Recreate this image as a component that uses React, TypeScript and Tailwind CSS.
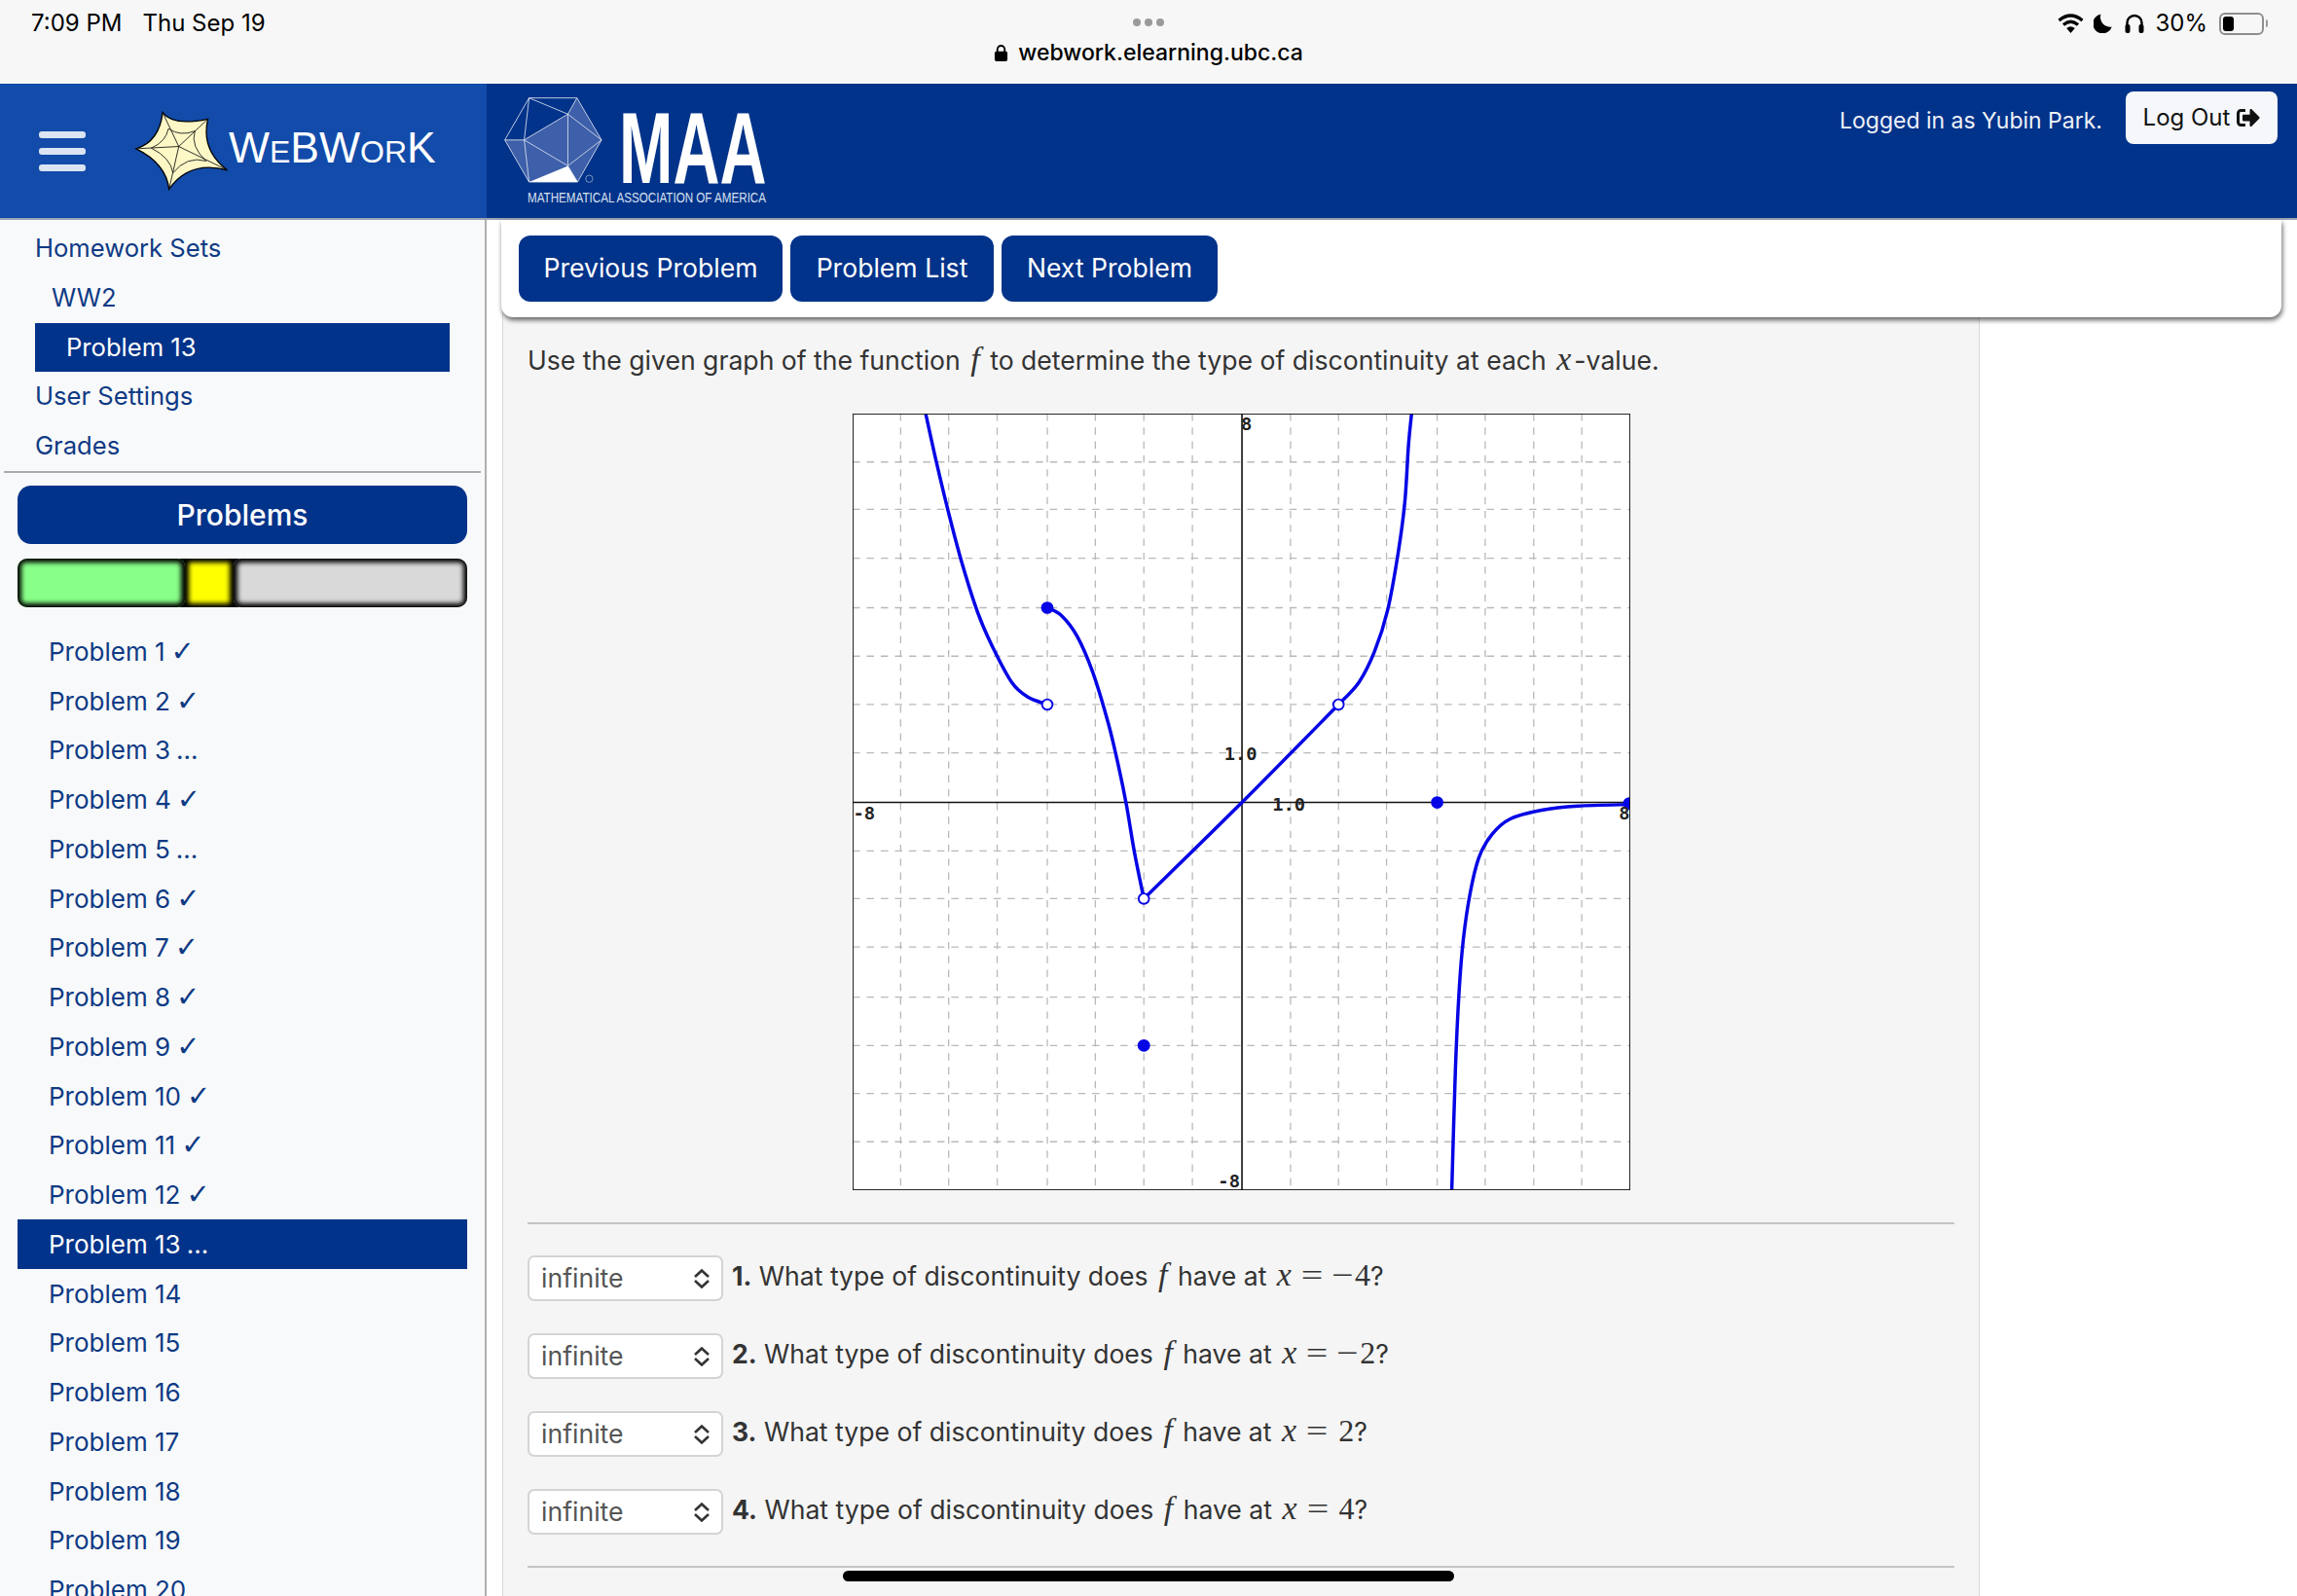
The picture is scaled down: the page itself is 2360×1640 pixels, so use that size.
import React from "react";
import { FaSignOutAlt } from "react-icons/fa";

type P = [number, number];
function smooth(pts: P[]): string {
  let d = `M${pts[0][0]} ${pts[0][1]}`;
  for (let i = 0; i < pts.length - 1; i++) {
    const p0 = pts[Math.max(i - 1, 0)];
    const p1 = pts[i];
    const p2 = pts[i + 1];
    const p3 = pts[Math.min(i + 2, pts.length - 1)];
    d += ` C${p1[0] + (p2[0] - p0[0]) / 6} ${p1[1] + (p2[1] - p0[1]) / 6} ${p2[0] - (p3[0] - p1[0]) / 6} ${p2[1] - (p3[1] - p1[1]) / 6} ${p2[0]} ${p2[1]}`;
  }
  return d;
}

const gridX = [122, 214, 307, 403, 495, 588, 681, 869, 961, 1053, 1150, 1242, 1335, 1427];
const gridY = [122, 214, 309, 405, 499, 593, 687, 877, 970, 1064, 1161, 1255, 1348, 1442];

const curves: P[][] = [
  [[170, 28], [190, 120], [215, 225], [240, 320], [270, 415], [300, 485], [335, 550], [365, 578], [403, 593]],
  [[403, 405], [430, 420], [460, 460], [490, 530], [520, 630], [540, 715], [555, 790], [570, 880], [588, 970]],
  [[588, 970], [776, 783], [961, 593]],
  [[961, 593], [1000, 550], [1030, 490], [1055, 410], [1075, 300], [1088, 200], [1095, 90], [1101, 28]],
  [[1178, 1536], [1185, 1300], [1192, 1150], [1200, 1050], [1213, 960], [1230, 890], [1255, 845], [1290, 815], [1350, 798], [1420, 790], [1520, 787]],
];

function Graph() {
  return (
    <svg viewBox="30 28 1490 1508" preserveAspectRatio="none" className="block w-[799px] h-[798px] mx-auto bg-white">
      {gridX.map((x) => (
        <line key={x} x1={x} x2={x} y1={28} y2={1536} stroke="#b9b9b9" strokeWidth={2.4} strokeDasharray="14 13" />
      ))}
      {gridY.map((y) => (
        <line key={y} y1={y} y2={y} x1={30} x2={1520} stroke="#b9b9b9" strokeWidth={2.4} strokeDasharray="14 13" />
      ))}
      <line x1={776} x2={776} y1={28} y2={1536} stroke="#111" strokeWidth={3} />
      <line x1={30} x2={1520} y1={783} y2={783} stroke="#111" strokeWidth={3} />
      {curves.map((c, i) => (
        <path key={i} d={smooth(c)} fill="none" stroke="#0505e6" strokeWidth={6.5} />
      ))}
      {[[403, 405], [588, 1255], [1150, 783], [1518, 785]].map(([x, y]) => (
        <ellipse key={x} cx={x} cy={y} rx={12} ry={12} fill="#0505e6" />
      ))}
      {[[403, 593], [588, 970], [961, 593]].map(([x, y]) => (
        <ellipse key={x} cx={x} cy={y} rx={10} ry={10} fill="#fff" stroke="#0505e6" strokeWidth={3.5} />
      ))}
      <g className="font-['DejaVu_Sans_Mono',monospace] font-bold" fontSize={35} fill="#222">
        <text x={774} y={60}>8</text>
        <text x={31} y={816}>-8</text>
        <text x={742} y={701}>1.0</text>
        <text x={834} y={799}>1.0</text>
        <text x={1498} y={816}>8</text>
        <text x={730} y={1530}>-8</text>
      </g>
      <rect x={30} y={28} width={1490} height={1508} fill="none" stroke="#111" strokeWidth={3.4} />
    </svg>
  );
}

function Star() {
  return (
    <svg viewBox="50 70 300 250" className="w-[100px] h-[83px] shrink-0">
      <path d="M140 75 Q172 118 280 95 Q258 190 340 253 Q222 222 160 312 Q150 232 58 187 Q130 165 140 75 Z" fill="#fdf8c6" stroke="#000" strokeWidth={4} strokeLinejoin="miter" />
      <g fill="none" stroke="#111" strokeWidth={2.6}>
        <path d="M140 75 L190 180 M280 95 L190 180 M340 253 L190 180 M160 312 L190 180 M58 187 L190 180" />
        <path d="M158 125 Q195 150 240 132 Q225 180 275 225 Q215 208 172 262 Q165 215 105 185 Q150 165 158 125 Z" />
      </g>
    </svg>
  );
}

function MaaMark() {
  const shade = "#3e5fa9";
  return (
    <svg viewBox="50 55 310 275" className="w-[103px] h-[92px] shrink-0">
      <g fill={shade}>
        <path d="M115 192 L250 112 L250 272 Z" />
        <path d="M250 112 L354 192 L250 272 Z" />
        <path d="M278 62 L354 192 L250 112 Z" />
        <path d="M55 192 L115 192 L130 322 Z" />
        <path d="M115 192 L250 272 L130 322 Z" />
        <path d="M250 272 L354 192 L280 322 Z" />
      </g>
      <path d="M130 322 L250 272 L280 322 Z" fill="#fff" />
      <g fill="none" stroke="#e8edf6" strokeWidth={2.4}>
        <path d="M130 62 L278 62 L354 192 L280 322 L130 322 L55 192 Z" />
        <path d="M130 62 L250 112 L278 62 M250 112 L354 192 M250 112 L115 192 L250 272 L354 192 M250 112 L250 272 M130 62 L115 192 L55 192 M115 192 L130 322 M250 272 L280 322" />
      </g>
      <circle cx={316} cy={312} r={11} fill="none" stroke="#8fa4cf" strokeWidth={2.5} />
    </svg>
  );
}

function Wifi() {
  return (
    <svg viewBox="0 0 27 20" className="w-[27px] h-[20px]">
      <g fill="none" stroke="#000" strokeWidth={3.2}>
        <path d="M1.5 7 Q13.5 -3 25.5 7" />
        <path d="M6 11.5 Q13.5 5 21 11.5" />
      </g>
      <path d="M13.5 20 L9.2 15 Q13.5 11.5 17.8 15 Z" fill="#000" />
    </svg>
  );
}

function Moon() {
  return (
    <svg viewBox="0 0 19 20" className="w-[19px] h-[20px] ml-[10px]">
      <path d="M7.5 0.5 A10 10 0 1 0 18.8 13.5 A10 10 0 0 1 7.5 0.5 Z" fill="#000" />
    </svg>
  );
}

function Phones() {
  return (
    <svg viewBox="0 0 20 20" className="w-[20px] h-[20px] ml-[13px]">
      <path d="M2.5 14 V9.5 A7.5 7.5 0 0 1 17.5 9.5 V14" fill="none" stroke="#000" strokeWidth={2.4} />
      <rect x={0.5} y={11} width={5} height={9} rx={2} fill="#000" />
      <rect x={14.5} y={11} width={5} height={9} rx={2} fill="#000" />
    </svg>
  );
}

function Battery() {
  return (
    <div className="flex items-center ml-[12px]">
      <div className="w-[46px] h-[23px] rounded-[6px] border-2 border-[#8e8e8e] p-[2px]">
        <div className="w-[11px] h-full rounded-[3px] bg-black" />
      </div>
      <div className="w-[2px] h-[8px] ml-[2px] rounded-r bg-[#999]" />
    </div>
  );
}

function Updown() {
  return (
    <svg viewBox="0 0 20 20" className="w-[20px] h-[20px]">
      <path d="M3 8 L10 1.5 L17 8 M3 12 L10 18.5 L17 12" fill="none" stroke="#333" strokeWidth={2.6} />
    </svg>
  );
}

function M({ children }: { children: React.ReactNode }) {
  return <span className="font-['Liberation_Serif',serif] italic text-[34px] leading-none px-[3px]">{children}</span>;
}

function Eq({ v }: { v: string }) {
  const neg = v.startsWith("−");
  return (
    <span className="font-['Liberation_Serif',serif] text-[32px] leading-none">
      <span className="inline-block ml-[9px] mr-[13px] scale-x-125">=</span>
      {neg && <span className="inline-block mr-[4px] scale-x-125">−</span>}
      <span>{neg ? v.slice(1) : v}</span>
    </span>
  );
}

const problems = [
  ["Problem 1", "✓"], ["Problem 2", "✓"], ["Problem 3", "..."], ["Problem 4", "✓"], ["Problem 5", "..."], ["Problem 6", "✓"], ["Problem 7", "✓"],
  ["Problem 8", "✓"], ["Problem 9", "✓"], ["Problem 10", "✓"], ["Problem 11", "✓"], ["Problem 12", "✓"], ["Problem 13", "..."], ["Problem 14", ""],
  ["Problem 15", ""], ["Problem 16", ""], ["Problem 17", ""], ["Problem 18", ""], ["Problem 19", ""], ["Problem 20", ""],
];

const questions = [
  { n: "1.", v: "−4" },
  { n: "2.", v: "−2" },
  { n: "3.", v: "2" },
  { n: "4.", v: "4" },
];

function Nav({ label, pad }: { label: string; pad: string }) {
  return <div className={`h-[51px] flex items-center text-[#0e3a84] ${pad}`}>{label}</div>;
}

export default function App() {
  return (
    <div className="relative w-[2360px] h-[1640px] overflow-hidden bg-white font-[Inter,sans-serif] text-[26.6px] text-[#333]">
      {/* iPad status bar */}
      <div className="h-[86px] bg-[#f7f7f7] grid grid-cols-3 text-black">
        <div className="pl-[32px] pt-[8px] text-[24px] leading-[32px] flex gap-[21px]">
          <span>7:09 PM</span>
          <span>Thu Sep 19</span>
        </div>
        <div className="flex flex-col items-center pt-[19px]">
          <div className="flex gap-[4px]">
            <div className="w-[8px] h-[8px] rounded-full bg-[#9a9a9a]" />
            <div className="w-[8px] h-[8px] rounded-full bg-[#9a9a9a]" />
            <div className="w-[8px] h-[8px] rounded-full bg-[#9a9a9a]" />
          </div>
          <div className="flex items-center gap-[10px] mt-[11px] text-[23px] leading-[32px] font-medium">
            <svg viewBox="0 0 16 20" className="w-[15px] h-[19px]">
              <path d="M4 9 V6 A4 4 0 0 1 12 6 V9" fill="none" stroke="#000" strokeWidth={2} />
              <rect x={1} y={8} width={14} height={11} rx={2} fill="#000" />
            </svg>
            <span>webwork.elearning.ubc.ca</span>
          </div>
        </div>
        <div className="flex justify-end items-start pt-[13px] pr-[30px]">
          <div className="flex items-center h-[22px]">
            <Wifi />
            <Moon />
            <Phones />
            <span className="ml-[11px] text-[24px]">30%</span>
            <Battery />
          </div>
        </div>
      </div>

      {/* Header */}
      <div className="h-[140px] flex border-b-2 border-[#9aa4b5] text-white">
        <div className="w-[500px] bg-[#124ba9] flex items-center pl-[40px]">
          <div className="flex flex-col gap-[10px] w-[48px]">
            <div className="h-[7px] rounded-[3px] bg-[#dbe4f2]" />
            <div className="h-[7px] rounded-[3px] bg-[#dbe4f2]" />
            <div className="h-[7px] rounded-[3px] bg-[#dbe4f2]" />
          </div>
          <div className="ml-[49px] flex items-center">
            <Star />
            <span className="-ml-[2px] -mt-[5px] font-['Liberation_Sans',sans-serif] text-[44.5px] leading-none whitespace-nowrap">
              W<span className="text-[32px]">E</span>BW<span className="text-[32px]">OR</span>K
            </span>
          </div>
        </div>
        <div className="flex-1 bg-[#02338a] flex items-start">
          <div className="ml-[17px] mt-[12px] flex flex-col w-[300px]">
            <div className="flex">
              <MaaMark />
              <span className="ml-[16px] mt-[14px] font-['Liberation_Sans',sans-serif] font-bold text-[104px] leading-[80px] origin-left scale-x-[0.64] whitespace-nowrap">
                MAA
              </span>
            </div>
            <div className="ml-[25px] mt-[1px] font-['Liberation_Sans',sans-serif] text-[15px] leading-[20px] origin-left scale-x-[0.775] text-[#d9e1f0] whitespace-nowrap">
              MATHEMATICAL ASSOCIATION OF AMERICA
            </div>
          </div>
          <div className="flex-1" />
          <div className="flex items-start">
            <span className="mt-[21px] text-[23px] leading-[34px] text-[#eef2f8]">Logged in as Yubin Park.</span>
            <button className="ml-[24px] mr-[20px] mt-[8px] h-[54px] w-[156px] rounded-[8px] bg-[#f5f7fa] text-[#111] text-[24px] flex items-center justify-center gap-[7px]">
              Log Out <FaSignOutAlt className="w-[24px] h-[24px]" />
            </button>
          </div>
        </div>
      </div>

      <div className="flex h-[1414px]">
        {/* Sidebar */}
        <aside className="w-[500px] shrink-0 bg-[#f8f9fa] border-r-2 border-[#b0b0b0] pt-[4px] overflow-hidden">
          <div className="pl-[36px] text-[25.6px]">
            <Nav label="Homework Sets" pad="" />
            <Nav label="WW2" pad="pl-[17px]" />
            <div className="mr-[36px] h-[50px] flex items-center pl-[32px] bg-[#02338a] text-white">Problem 13</div>
            <Nav label="User Settings" pad="" />
            <Nav label="Grades" pad="" />
          </div>
          <div className="mx-[4px] border-t-2 border-[#ababab]" />
          <div className="mx-[18px] mt-[13px] h-[60px] rounded-[14px] bg-[#02338a] text-white font-medium text-[30px] flex items-center justify-center">
            Problems
          </div>
          <div className="mx-[18px] mt-[15px] h-[50px] rounded-[10px] bg-black flex overflow-hidden">
            <div className="w-[172px] bg-[#88ff88] rounded-[8px] shadow-[inset_0_0_5px_4px_#000]" />
            <div className="w-[50px] bg-[#ffff00] shadow-[inset_0_0_5px_4px_#000]" />
            <div className="flex-1 bg-[#d9d9d9] rounded-[8px] shadow-[inset_0_0_5px_4px_#000]" />
          </div>
          <div className="mx-[18px] mt-[20px] text-[26px]">
            {problems.map(([p, mark]) => (
              <div
                key={p}
                className={`h-[50.75px] flex items-center pl-[32px] gap-[6px] ${
                  p === "Problem 13" ? "bg-[#02338a] text-white" : "text-[#0e3a84]"
                }`}
              >
                <span>{p}</span>
                {mark === "✓" ? (
                  <span className="font-['DejaVu_Sans',sans-serif] text-[29px] leading-none">{mark}</span>
                ) : (
                  mark && <span>{mark}</span>
                )}
              </div>
            ))}
          </div>
        </aside>

        {/* Main */}
        <main className="flex-1 min-w-0 relative">
          <div className="absolute z-10 left-[15px] top-0 w-[1829px] h-[100px] bg-white rounded-b-[12px] shadow-[1px_3px_5px_rgba(0,0,0,0.6)] flex items-start gap-[8px] pl-[18px] pt-[16px]">
            <button className="h-[68px] w-[271px] rounded-[12px] bg-[#02338a] text-white">Previous Problem</button>
            <button className="h-[68px] w-[209px] rounded-[12px] bg-[#02338a] text-white">Problem List</button>
            <button className="h-[68px] w-[222px] rounded-[12px] bg-[#02338a] text-white">Next Problem</button>
          </div>
          <div className="ml-[16px] w-[1518px] h-full bg-[#f5f5f5] border-x border-[#d8d8d8] pt-[124px] px-[25px]">
            <p className="h-[40px] leading-[40px] whitespace-nowrap text-[#333]">
              Use the given graph of the function <M>f</M> to determine the type of discontinuity at each <M>x</M>-value.
            </p>
            <div className="mt-[35px]">
              <Graph />
            </div>
            <div className="mt-[33px] border-t-2 border-[#c4c4c4] w-[1466px]" />
            <div className="mt-[32px] flex flex-col gap-[33px]">
              {questions.map((q) => (
                <div key={q.n} className="flex items-center h-[47px]">
                  <div className="w-[201px] h-[47px] rounded-[7px] border-2 border-[#d4d4d4] bg-white flex items-center justify-between pl-[12px] pr-[10px] text-[#555]">
                    <span>infinite</span>
                    <Updown />
                  </div>
                  <span className="ml-[9px] whitespace-nowrap text-[#333] -mt-[3px]">
                    <b className="font-bold">{q.n}</b> What type of discontinuity does <M>f</M> have at <M>x</M>
                    <Eq v={q.v} />?
                  </span>
                </div>
              ))}
            </div>
            <div className="mt-[32px] border-t-2 border-[#c4c4c4] w-[1466px]" />
          </div>
        </main>
      </div>

      {/* Home indicator */}
      <div className="absolute left-[866px] top-[1614px] w-[628px] h-[11px] rounded-full bg-black" />
    </div>
  );
}
